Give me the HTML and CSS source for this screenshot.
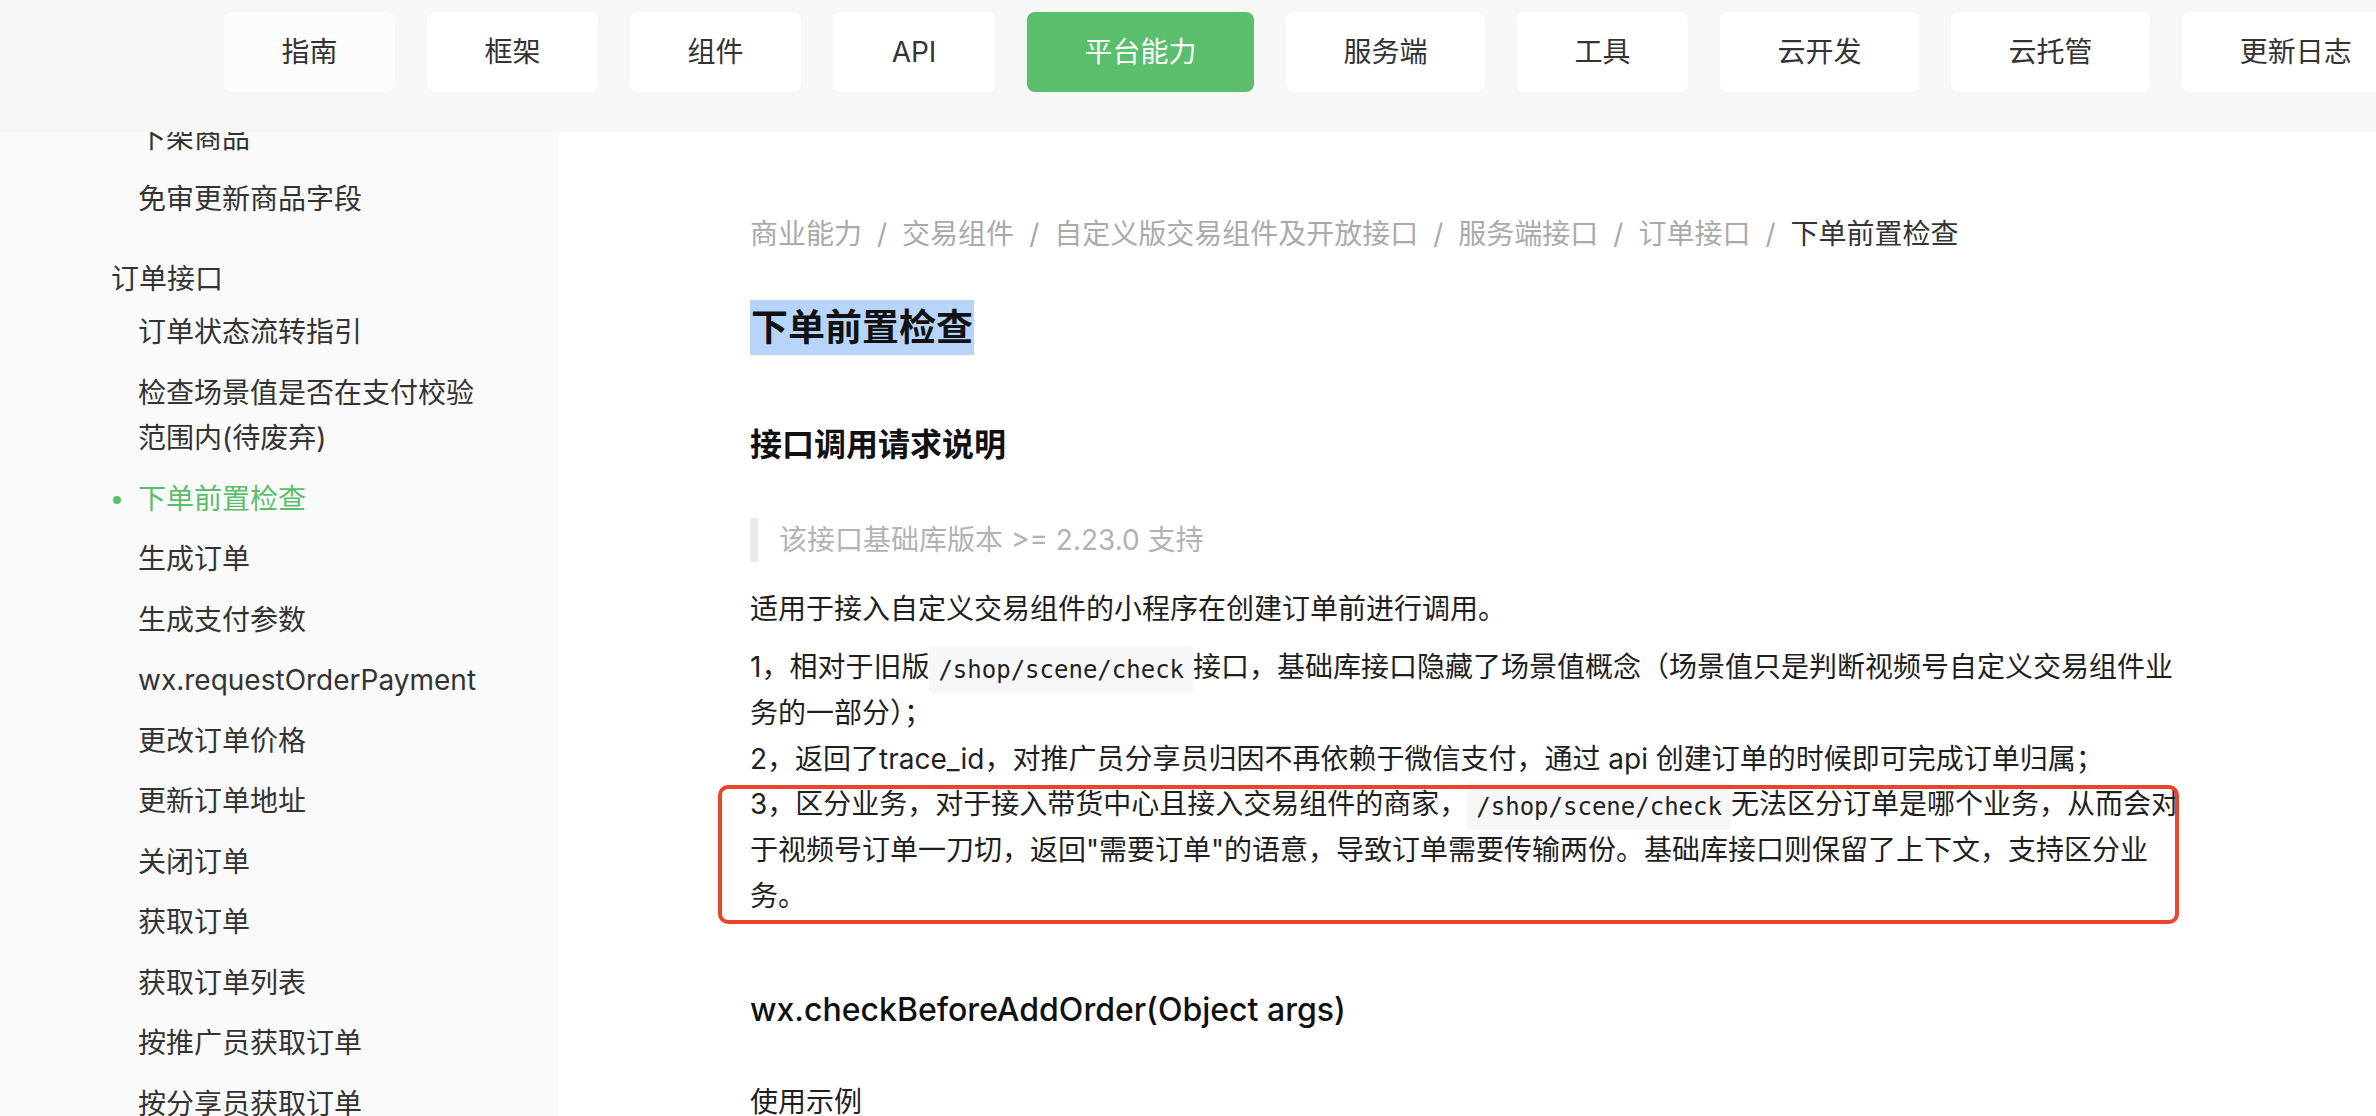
FILE: index.html
```html
<!DOCTYPE html>
<html lang="zh-CN">

<head>
  <meta charset="UTF-8">
  <title>下单前置检查</title>
  <meta name="viewport" content="width=device-width, initial-scale=1.0">
  <link rel="stylesheet" href="styles.css">
</head>

<body>
<header class="top-nav">
  <a class="nav-btn hover">指南</a>
  <a class="nav-btn">框架</a>
  <a class="nav-btn">组件</a>
  <a class="nav-btn">API</a>
  <a class="nav-btn active">平台能力</a>
  <a class="nav-btn">服务端</a>
  <a class="nav-btn">工具</a>
  <a class="nav-btn">云开发</a>
  <a class="nav-btn">云托管</a>
  <a class="nav-btn">更新日志</a>
</header>

<div class="layout">
  <aside class="sidebar">
    <ul class="menu">
      <li>下架商品</li>
      <li>免审更新商品字段</li>
      <li class="group">订单接口</li>
      <li>订单状态流转指引</li>
      <li>检查场景值是否在支付校验范围内(待废弃)</li>
      <li class="active">下单前置检查</li>
      <li>生成订单</li>
      <li>生成支付参数</li>
      <li>wx.requestOrderPayment</li>
      <li>更改订单价格</li>
      <li>更新订单地址</li>
      <li>关闭订单</li>
      <li>获取订单</li>
      <li>获取订单列表</li>
      <li>按推广员获取订单</li>
      <li>按分享员获取订单</li>
    </ul>
  </aside>

  <main class="content">
    <div class="article">
      <div class="breadcrumb">
        <a>商业能力</a><span class="sep">/</span><a>交易组件</a><span class="sep">/</span><a>自定义版交易组件及开放接口</a><span class="sep">/</span><a>服务端接口</a><span class="sep">/</span><a>订单接口</a><span class="sep">/</span><span class="current">下单前置检查</span>
      </div>

      <h1><span class="selected-text">下单前置检查</span></h1>

      <h2>接口调用请求说明</h2>

      <blockquote>该接口基础库版本 &gt;= 2.23.0 支持</blockquote>

      <p class="lead">适用于接入自定义交易组件的小程序在创建订单前进行调用。</p>

      <!-- 三条说明，第三条带红框标注 -->
      <div class="notes">
        <p>1，相对于旧版<code>/shop/scene/check</code>接口，基础库接口隐藏了场景值概念（场景值只是判断视频号自定义交易组件业务的一部分）；</p>
        <p>2，返回了trace_id，对推广员分享员归因不再依赖于微信支付，通过 api 创建订单的时候即可完成订单归属；</p>
        <p class="marked">3，区分业务，对于接入带货中心且接入交易组件的商家，<code>/shop/scene/check</code>无法区分订单是哪个业务，从而会对于视频号订单一刀切，返回"需要订单"的语意，导致订单需要传输两份。基础库接口则保留了上下文，支持区分业务。</p>
      </div>

      <h3>wx.checkBeforeAddOrder(Object args)</h3>

      <p class="example">使用示例</p>
    </div>
  </main>
</div>
</body>
</html>
```

FILE: styles.css
```css
body {
  margin: 0;
  font-family: Inter, "Noto Sans CJK SC", sans-serif;
  color: #1f1f1f;
  background-color: #fff;
  overflow: hidden;
}

.top-nav {
  height: 132px;
  box-sizing: border-box;
  padding: 12px 0 0 224px;
  display: flex;
  gap: 32px;
  background-color: #f7f7f7;
  overflow: hidden;
}

.nav-btn {
  flex: none;
  box-sizing: border-box;
  min-width: 162px;
  height: 80px;
  line-height: 80px;
  padding: 0 57.5px;
  font-size: 28px;
  text-align: center;
  color: #333;
  background-color: #fff;
  border-radius: 8px;
  text-decoration: none;
}

.nav-btn.hover {
  background-color: #fcfcfc;
}

.nav-btn.active {
  background-color: #5abe6c;
  color: #fff;
}

.layout {
  display: flex;
  height: calc(100vh - 132px);
}

.sidebar {
  flex: none;
  width: 558px;
  box-sizing: border-box;
  padding: 0 68px 0 111px;
  background-color: #fafafa;
  overflow: hidden;
}

.menu {
  list-style: none;
  margin: -23.25px 0 0;
  padding: 0;
  font-size: 28px;
  line-height: 45.5px;
  color: #333;
}

.menu li {
  position: relative;
  padding: 7.5px 0 7.5px 27px;
}

.menu .group {
  padding: 27.5px 0 0;
}

.menu .active {
  color: #5abe6c;
}

.menu .active::before {
  content: "";
  position: absolute;
  left: 2px;
  top: 26.25px;
  width: 8px;
  height: 8px;
  border-radius: 50%;
  background-color: #5abe6c;
}

.content {
  flex: 1;
  padding: 80px 0 0 192px;
}

.article {
  width: 1432px;
}

.breadcrumb {
  font-size: 28px;
  line-height: 45.5px;
  color: #aaa;
}

.breadcrumb .sep {
  margin: 0 15px;
}

.breadcrumb .current {
  color: #353535;
}

h1 {
  margin: 42px 0 0;
  font-size: 37px;
  line-height: 55px;
  font-weight: bold;
  color: #111;
}

.selected-text {
  display: inline-block;
  padding: 0 1px;
  background-color: #b7d5fb;
}

h2 {
  margin: 67px 0 0;
  font-size: 32px;
  line-height: 45px;
  font-weight: bold;
  color: #111;
}

blockquote {
  margin: 51.5px 0 0;
  padding-left: 21px;
  border-left: 8px solid #ebebeb;
  font-size: 28px;
  line-height: 44px;
  color: #b2b2b2;
}

.lead {
  margin: 25px 0 0;
  font-size: 28px;
  line-height: 45.5px;
}

.notes {
  margin-top: 12.5px;
  font-size: 28px;
  line-height: 45.8px;
}

.notes p {
  margin: 0;
}

code {
  font-family: "DejaVu Sans Mono", monospace;
  font-size: 24px;
  line-height: 1;
  padding: 9.5px 9px;
  background-color: #f7f7f7;
  border-radius: 4px;
}

/* 红框标注 */
.marked {
  position: relative;
}

.marked::after {
  content: "";
  position: absolute;
  left: -32px;
  right: 3px;
  top: 3px;
  bottom: -4px;
  border: 4px solid #e8452c;
  border-radius: 10px;
}

h3 {
  margin: 67.5px 0 0;
  font-size: 32px;
  line-height: 45px;
  font-weight: 500;
  color: #111;
}

.example {
  margin: 47.5px 0 0;
  font-size: 28px;
  line-height: 45.5px;
}
```
